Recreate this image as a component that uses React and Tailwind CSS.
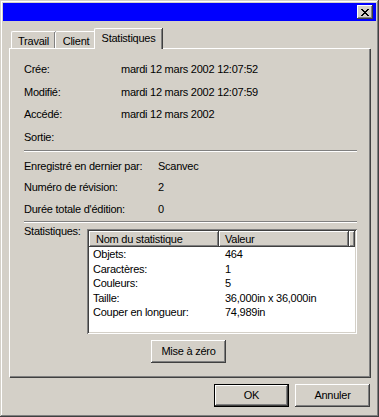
const raised =
  'shadow-[inset_-1px_-1px_#404040,inset_1px_1px_#ffffff,inset_-2px_-2px_#808080]';
const sunken =
  'shadow-[inset_1px_1px_#808080,inset_-1px_-1px_#ffffff,inset_2px_2px_#404040,inset_-2px_-2px_#d4d0c8]';

function Row({ label, value, labelW, className = '' }) {
  return (
    <div className={`flex h-[13px] leading-[13px] ${className}`}>
      <div style={{ width: labelW }} className="shrink-0">{label}</div>
      <div>{value}</div>
    </div>
  );
}

function Separator({ className = '' }) {
  return <div className={`w-[333px] h-[2px] border-t border-[#808080] border-b border-b-white ${className}`} />;
}

function Tab({ label, active, w }) {
  if (active) {
    return (
      <div
        className={`${w} h-[21px] -mb-[1px] -ml-[2px] relative z-10 bg-[#d4d0c8] border-l border-t border-white rounded-tl-[2px] shadow-[inset_-1px_0_#808080,1px_0_#404040] flex justify-center pt-[2px] leading-[14px]`}
      >
        {label}
      </div>
    );
  }
  return (
    <div
      className={`${w} h-[17px] border-l border-t border-white rounded-tl-[2px] shadow-[inset_-1px_0_#808080,1px_0_#404040] flex justify-center pt-[2px] leading-[14px]`}
    >
      {label}
    </div>
  );
}

function Button({ children, def, className = '' }) {
  return (
    <div
      className={`w-[75px] h-[23px] flex items-center justify-center bg-[#d4d0c8] ${
        def
          ? 'border border-black shadow-[inset_-1px_-1px_#404040,inset_1px_1px_#ffffff,inset_-2px_-2px_#808080]'
          : raised
      } ${className}`}
    >
      {children}
    </div>
  );
}

const stats = [
  ['Objets:', '464'],
  ['Caractères:', '1'],
  ['Couleurs:', '5'],
  ['Taille:', '36,000in x 36,000in'],
  ['Couper en longueur:', '74,989in'],
];

export default function App() {
  return (
    <div
      className={`w-[379px] h-[417px] bg-[#d4d0c8] p-[3px] flex flex-col text-[11px] tracking-[-0.25px] text-black shadow-[inset_-1px_-1px_#404040,inset_1px_1px_#d4d0c8,inset_-2px_-2px_#808080,inset_2px_2px_#ffffff]`}
      style={{ fontFamily: '"Liberation Sans", Arial, sans-serif' }}
    >
      {/* title bar */}
      <div className="h-[18px] bg-[#0000ff] flex items-start justify-end pr-[3px] pt-[2px]">
        <div className={`w-[16px] h-[14px] bg-[#d4d0c8] ${raised} flex items-center justify-center`}>
          <svg width="8" height="7" viewBox="0 0 8 7" shapeRendering="crispEdges">
            <path
              d="M0 0h2v1h-2zM6 0h2v1h-2zM1 1h2v1h-2zM5 1h2v1h-2zM2 2h4v1h-4zM3 3h2v1h-2zM2 4h4v1h-4zM1 5h2v1h-2zM5 5h2v1h-2zM0 6h2v1h-2zM6 6h2v1h-2z"
              fill="#000"
            />
          </svg>
        </div>
      </div>

      <div className="flex-1 flex flex-col px-[6px] pt-[8px]">
        {/* tabs */}
        <div className="h-[19px] flex items-end pl-[2px]">
          <Tab label="Travail" w="w-[44px]" />
          <Tab label="Client" w="w-[41px]" />
          <Tab label="Statistiques" w="w-[68px]" active />
        </div>

        {/* panel */}
        <div className="w-[361px] h-[329px] border-l border-t border-white shadow-[inset_-1px_-1px_#808080,1px_1px_#404040] pl-[14px] pt-[14px] flex flex-col">
          <Row label="Crée:" value="mardi 12 mars 2002 12:07:52" labelW={97} />
          <Row label="Modifié:" value="mardi 12 mars 2002 12:07:59" labelW={97} className="mt-[10px]" />
          <Row label="Accédé:" value="mardi 12 mars 2002" labelW={97} className="mt-[9px]" />
          <Row label="Sortie:" value="" labelW={97} className="mt-[10px]" />
          <Separator className="mt-[6px]" />
          <Row label="Enregistré en dernier par:" value="Scanvec" labelW={134} className="mt-[8px]" />
          <Row label="Numéro de révision:" value="2" labelW={134} className="mt-[8px]" />
          <Row label="Durée totale d'édition:" value="0" labelW={134} className="mt-[9px]" />
          <Separator className="mt-[5px]" />

          <div className="flex mt-[2px]">
            <div className="w-[63px] shrink-0 leading-[13px]">Statistiques:</div>
            <div className={`mt-[4px] w-[270px] h-[105px] bg-white ${sunken} p-[2px] flex flex-col`}>
              <div className="flex h-[16px] bg-[#d4d0c8] leading-[16px]">
                <div className={`w-[130px] pl-[7px] ${raised}`}>Nom du statistique</div>
                <div className={`w-[130px] pl-[6px] ${raised}`}>Valeur</div>
                <div className={`flex-1 ${raised}`} />
              </div>
              {stats.map(([k, v]) => (
                <div key={k} className="flex h-[14.5px] leading-[14.5px]">
                  <div className="w-[131px] pl-[4px]">{k}</div>
                  <div className="pl-[5px]">{v}</div>
                </div>
              ))}
            </div>
          </div>

          <div className="flex pl-[127px] mt-[6px]">
            <Button>Mise à zéro</Button>
          </div>
        </div>

        {/* footer buttons */}
        <div className="flex justify-end gap-[6px] mt-[7px]">
          <Button def>OK</Button>
          <Button>Annuler</Button>
        </div>
      </div>
    </div>
  );
}
